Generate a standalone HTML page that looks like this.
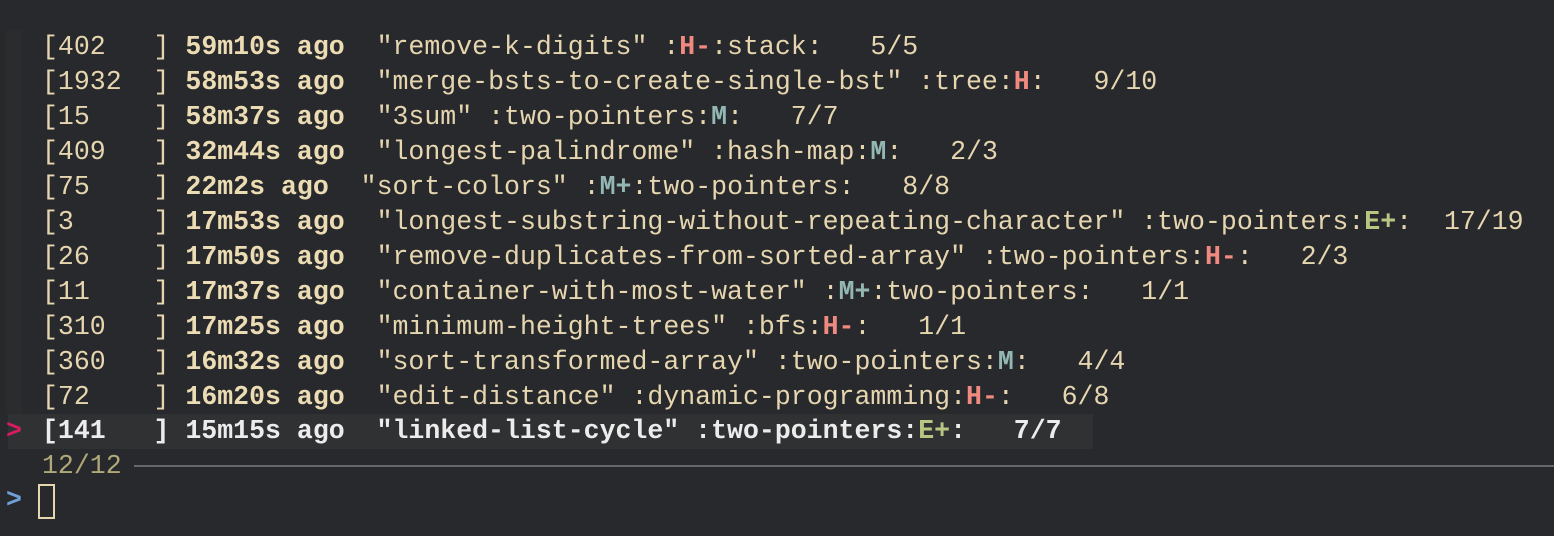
<!DOCTYPE html>
<html><head><meta charset="utf-8"><style>
html,body{margin:0;padding:0;background:#28292c;width:1554px;height:536px;overflow:hidden;position:relative}
.l{position:absolute;left:42px;height:35px;line-height:35px;font-family:"Liberation Mono",monospace;font-size:26.55px;color:#e6d6b0;white-space:pre}
b{font-weight:bold}
.t{color:#ecdcb4}
.h{color:#f08a80}
.m{color:#93b8b4}
.e{color:#b8c684}
.sel{color:#ececec}
.gut{position:absolute;left:6px;top:30px;width:16px;height:385px;background:#2b2c2e}
.band{position:absolute;left:8px;top:414px;width:1085px;height:35px;background:#303133}
</style></head><body>
<div class="gut"></div>
<div class="band"></div>
<div class="l" style="top:30px">[402   ] <b class="t">59m10s ago</b>  "remove-k-digits" :<b class="h">H-</b>:stack:   5/5</div>
<div class="l" style="top:65px">[1932  ] <b class="t">58m53s ago</b>  "merge-bsts-to-create-single-bst" :tree:<b class="h">H</b>:   9/10</div>
<div class="l" style="top:100px">[15    ] <b class="t">58m37s ago</b>  "3sum" :two-pointers:<b class="m">M</b>:   7/7</div>
<div class="l" style="top:135px">[409   ] <b class="t">32m44s ago</b>  "longest-palindrome" :hash-map:<b class="m">M</b>:   2/3</div>
<div class="l" style="top:170px">[75    ] <b class="t">22m2s ago</b>  "sort-colors" :<b class="m">M+</b>:two-pointers:   8/8</div>
<div class="l" style="top:205px">[3     ] <b class="t">17m53s ago</b>  "longest-substring-without-repeating-character" :two-pointers:<b class="e">E+</b>:  17/19</div>
<div class="l" style="top:240px">[26    ] <b class="t">17m50s ago</b>  "remove-duplicates-from-sorted-array" :two-pointers:<b class="h">H-</b>:   2/3</div>
<div class="l" style="top:275px">[11    ] <b class="t">17m37s ago</b>  "container-with-most-water" :<b class="m">M+</b>:two-pointers:   1/1</div>
<div class="l" style="top:310px">[310   ] <b class="t">17m25s ago</b>  "minimum-height-trees" :bfs:<b class="h">H-</b>:   1/1</div>
<div class="l" style="top:345px">[360   ] <b class="t">16m32s ago</b>  "sort-transformed-array" :two-pointers:<b class="m">M</b>:   4/4</div>
<div class="l" style="top:380px">[72    ] <b class="t">16m20s ago</b>  "edit-distance" :dynamic-programming:<b class="h">H-</b>:   6/8</div>
<div class="l sel" style="top:414px;font-weight:bold">[141   ] 15m15s ago  "linked-list-cycle" :two-pointers:<span class="e">E+</span>:   7/7</div>
<div class="l" style="top:414px;left:6px;color:#d81b60;font-weight:bold">&gt;</div>
<div class="l" style="top:449px;color:#b0a878">12/12</div>
<div style="position:absolute;left:134px;top:465px;width:1420px;height:2px;background:#66676a"></div>
<div class="l" style="top:483px;left:6px;color:#6fa0d8;font-weight:bold">&gt;</div>
<div style="position:absolute;left:38px;top:484px;width:13px;height:31px;border:2px solid #e6d6b0"></div>
</body></html>
